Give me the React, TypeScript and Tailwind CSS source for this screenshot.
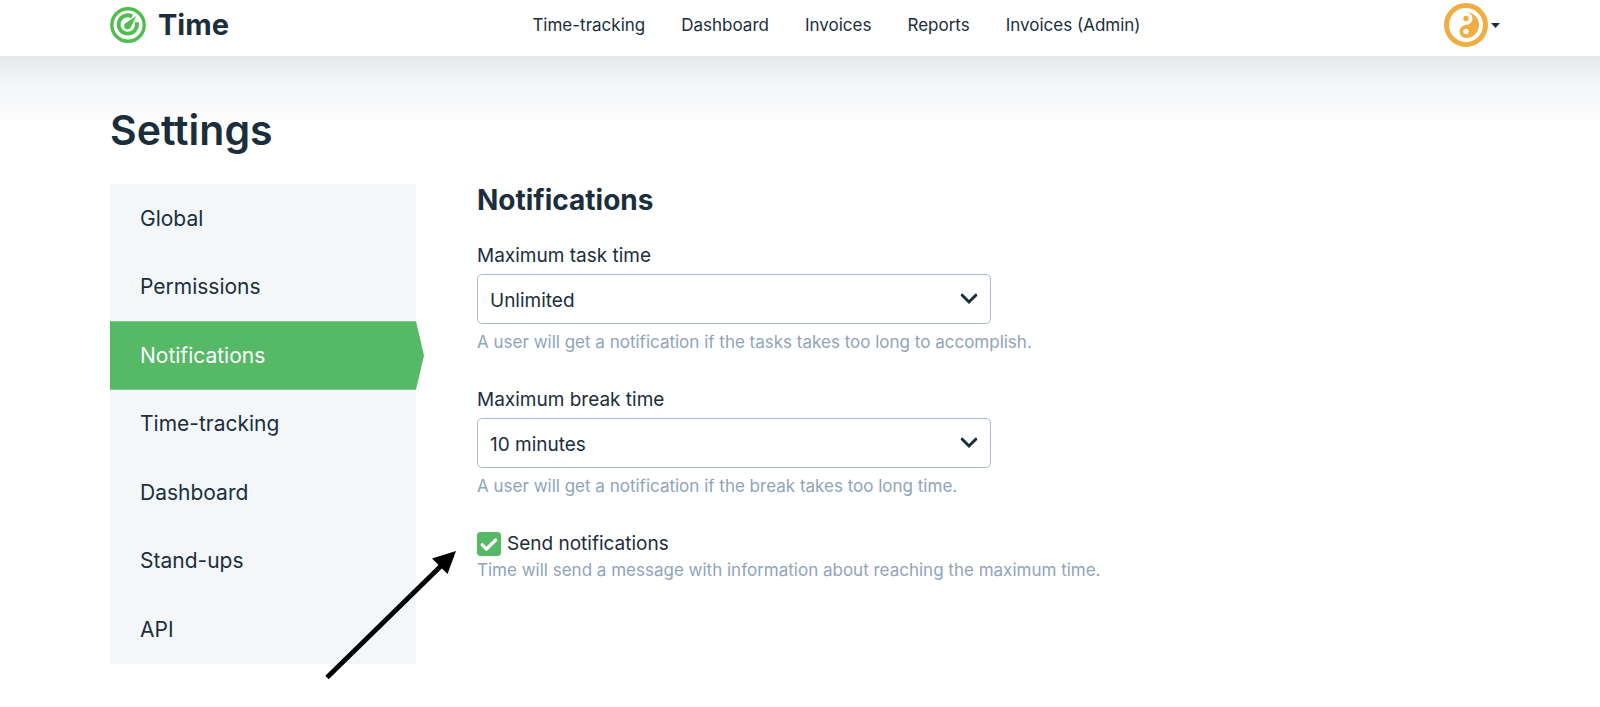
import { useState } from "react";

const navLinks = ["Time-tracking", "Dashboard", "Invoices", "Reports", "Invoices (Admin)"];

const sections = ["Global", "Permissions", "Notifications", "Time-tracking", "Dashboard", "Stand-ups", "API"];

const Logo = () => (
  <a href="#" className="flex items-center gap-3">
    <svg viewBox="0 0 36 36" className="size-9" fill="none" aria-hidden="true">
      <circle cx="18" cy="18" r="16.2" stroke="#4fbd50" strokeWidth="3.4" />
      <path d="M22.2 9.400A9.200 9.200 0 1 0 26.700 15.200" stroke="#4fbd50" strokeWidth="3.800" />
      <path d="M26.300 9 20.600 20.500a3.400 3.400 0 1 1-4.800-4.400Z" fill="#4fbd50" />
    </svg>
    <span className="text-[29px] leading-9 font-bold">Time</span>
  </a>
);

const Avatar = () => (
  <button type="button" aria-label="Account menu" className="flex items-center gap-[3px]">
    <svg viewBox="0 0 44 44" className="size-11" aria-hidden="true">
      <circle cx="22" cy="22" r="19.5" fill="#fff" stroke="#f0ad41" strokeWidth="5" />
      <path d="M22 9a6.500 6.500 0 0 1 0 13a6.500 6.500 0 0 0 0 13a13 13 0 0 0 0-26Z" fill="#f0ad41" />
      <circle cx="22" cy="15.500" r="2.700" fill="#f0ad41" />
      <circle cx="22" cy="28.500" r="2.700" fill="#fff" />
    </svg>
    <svg viewBox="0 0 9 5" className="h-[5px] w-[9px]" aria-hidden="true">
      <path d="M0 0h9L4.500 5Z" fill="#1b2e3c" />
    </svg>
  </button>
);

const Header = () => (
  <header className="flex h-14 items-center justify-between bg-white pr-[100px] pb-1.5 pl-[110px]">
    <Logo />
    <nav className="flex gap-9 text-[17px] leading-6">
      {navLinks.map((l) => (
        <a key={l} href="#">{l}</a>
      ))}
    </nav>
    <Avatar />
  </header>
);

const Sidebar = () => (
  <nav className="flex h-[480px] w-[306px] shrink-0 flex-col bg-[#f3f7fa] text-[21px]">
    {sections.map((s) =>
      s === "Notifications" ? (
        <a key={s} href="#" aria-current="page" className="-mr-2 flex flex-1 items-center bg-[#56b966] pl-[30px] text-white [clip-path:polygon(0_0,calc(100%-8px)_0,100%_50%,calc(100%-8px)_100%,0_100%)]">
          {s}
        </a>
      ) : (
        <a key={s} href="#" className="flex flex-1 items-center pl-[30px]">{s}</a>
      )
    )}
  </nav>
);

type FieldProps = { id: string; label: string; options: string[]; initial: string; help: string };

const SelectField = ({ id, label, options, initial, help }: FieldProps) => {
  const [value, setValue] = useState(initial);
  return (
    <div className="mb-8">
      <label htmlFor={id} className="block text-[19px] leading-7">{label}</label>
      <div className="mt-1 grid w-[514px] items-center">
        <select
          id={id}
          value={value}
          onChange={(e) => setValue(e.target.value)}
          aria-describedby={`${id}-help`}
          className="col-start-1 row-start-1 h-[50px] appearance-none rounded-[5px] border border-[#aab9d0] bg-white px-3 pt-1 text-[19px]"
        >
          {options.map((o) => (
            <option key={o}>{o}</option>
          ))}
        </select>
        <svg viewBox="0 0 18 12" className="pointer-events-none col-start-1 row-start-1 mr-[13px] h-3 w-[18px] justify-self-end" fill="none" aria-hidden="true">
          <path d="M2.200 2.200 9 9l6.800-6.800" stroke="#1b2e3c" strokeWidth="3" strokeLinecap="round" />
        </svg>
      </div>
      <p id={`${id}-help`} className="mt-1.5 text-[17px] leading-6 text-[#8fa4bb]">{help}</p>
    </div>
  );
};

const SendNotifications = () => {
  const [checked, setChecked] = useState(true);
  return (
    <div>
      <label className="flex items-center gap-1.5 text-[19px] leading-7">
        <span className="grid size-6">
          <input
            type="checkbox"
            checked={checked}
            onChange={(e) => setChecked(e.target.checked)}
            aria-describedby="send-help"
            className="col-start-1 row-start-1 size-6 appearance-none rounded-[3px] border border-[#aab9d0] bg-white checked:border-[#56b966] checked:bg-[#56b966]"
          />
          {checked && (
            <svg viewBox="0 0 24 24" className="pointer-events-none col-start-1 row-start-1 size-6" fill="none" aria-hidden="true">
              <path d="m5.300 12.800 4.200 4.200 9.200-9" stroke="#fff" strokeWidth="3.200" strokeLinecap="round" strokeLinejoin="round" />
            </svg>
          )}
        </span>
        Send notifications
      </label>
      <p id="send-help" className="text-[17px] leading-6 text-[#8fa4bb]">
        Time will send a message with information about reaching the maximum time.
      </p>
    </div>
  );
};

// Hand-drawn pointer towards the checkbox
const Arrow = () => (
  <svg viewBox="0 0 132 130" className="pointer-events-none absolute top-[366px] left-[215px] h-[130px] w-[132px]" aria-hidden="true">
    <path d="M2 127.500 118 14" stroke="#000" strokeWidth="4.800" />
    <path d="M131 1 107 8.500 122.500 24Z" fill="#000" />
  </svg>
);

const App = () => (
  <div className="min-h-screen bg-white font-['Inter',sans-serif] text-[#1b2e3c]">
    <Header />
    <main className="bg-linear-to-b from-[#e5e9ec] via-[#f3f5f7] via-[28px] to-white to-[72px] pt-11 pr-[100px] pb-10 pl-[110px]">
      <h1 className="text-[41px] leading-[60px] font-semibold">Settings</h1>
      <div className="relative mt-6 flex gap-[61px]">
        <Sidebar />
        <section className="min-w-0 flex-1">
          <h2 className="mb-[26px] text-[28px] leading-8 font-bold">Notifications</h2>
          <SelectField
            id="task-time"
            label="Maximum task time"
            options={["Unlimited", "1 hour", "2 hours", "4 hours"]}
            initial="Unlimited"
            help="A user will get a notification if the tasks takes too long to accomplish."
          />
          <SelectField
            id="break-time"
            label="Maximum break time"
            options={["Unlimited", "5 minutes", "10 minutes", "15 minutes"]}
            initial="10 minutes"
            help="A user will get a notification if the break takes too long time."
          />
          <SendNotifications />
        </section>
        <Arrow />
      </div>
    </main>
  </div>
);

export default App;
